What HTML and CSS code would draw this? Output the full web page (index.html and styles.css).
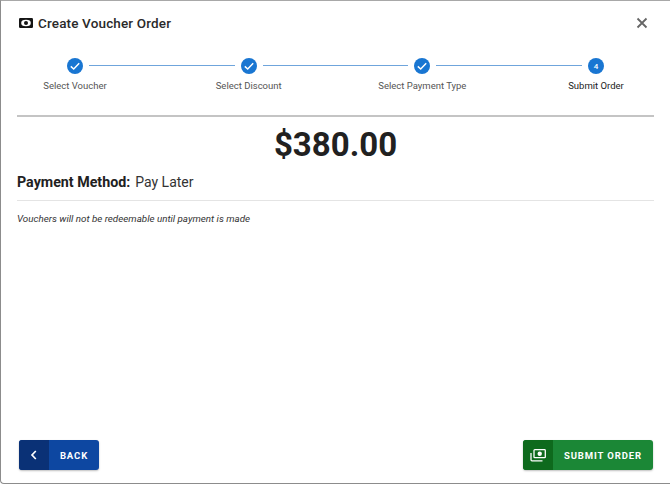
FILE: index.html

```html
<!DOCTYPE html>
<html lang="en">
<head>
  <meta charset="UTF-8">
  <title>Create Voucher Order</title>
  <link rel="stylesheet" href="styles.css">
</head>
<body>
  <div class="modal">
    <div class="modal-header">
      <svg class="title-icon" viewBox="0 0 14 10" width="14" height="10">
        <rect width="14" height="10" rx="1.200" fill="#151515"/>
        <ellipse cx="7" cy="5" rx="4.800" ry="3.200" fill="#fff"/>
        <circle cx="7" cy="5" r="2" fill="#151515"/>
      </svg>
      <h2 class="modal-title">Create Voucher Order</h2>
      <svg class="close-icon" viewBox="0 0 12 12" width="12" height="12">
        <path d="M1.500 1.500l9 9M10.500 1.500l-9 9" stroke="#666" stroke-width="1.800" fill="none"/>
      </svg>
    </div>

    <div class="stepper">
      <div class="step">
        <span class="step-dot"><svg viewBox="0 0 16 16" width="16" height="16"><path d="M3.800 8.400l2.900 2.600 5.500-5.700" stroke="#fff" stroke-width="1.500" fill="none"/></svg></span>
        <span class="step-label">Select Voucher</span>
      </div>
      <div class="connector"></div>
      <div class="step">
        <span class="step-dot"><svg viewBox="0 0 16 16" width="16" height="16"><path d="M3.800 8.400l2.900 2.600 5.500-5.700" stroke="#fff" stroke-width="1.500" fill="none"/></svg></span>
        <span class="step-label">Select Discount</span>
      </div>
      <div class="connector"></div>
      <div class="step">
        <span class="step-dot"><svg viewBox="0 0 16 16" width="16" height="16"><path d="M3.800 8.400l2.900 2.600 5.500-5.700" stroke="#fff" stroke-width="1.500" fill="none"/></svg></span>
        <span class="step-label">Select Payment Type</span>
      </div>
      <div class="connector"></div>
      <div class="step">
        <span class="step-dot">4</span>
        <span class="step-label step-label-active">Submit Order</span>
      </div>
    </div>

    <div class="modal-body">
      <div class="amount">$380.00</div>
      <div class="method">
        <span class="method-key">Payment Method:</span>
        <span class="method-value">Pay Later</span>
      </div>
      <p class="note">Vouchers will not be redeemable until payment is made</p>
    </div>

    <div class="modal-footer">
      <button class="btn btn-back">
        <span class="btn-icon">
          <svg viewBox="0 0 8 10" width="8" height="10"><path d="M5.800 1L2 5l3.800 4" stroke="#fff" stroke-width="1.700" fill="none"/></svg>
        </span>
        <span class="btn-text">BACK</span>
      </button>
      <button class="btn btn-submit">
        <span class="btn-icon">
          <svg viewBox="0 0 16 13" width="16" height="13">
            <rect x="4" y="0.700" width="11.300" height="8" rx="0.800" fill="none" stroke="#fff" stroke-width="1.300"/>
            <circle cx="9.700" cy="4.700" r="2.200" fill="#fff"/>
            <path d="M1 4v6.800a1 1 0 0 0 1 1h10.500" fill="none" stroke="#fff" stroke-width="1.300"/>
          </svg>
        </span>
        <span class="btn-text">SUBMIT ORDER</span>
      </button>
    </div>
  </div>
</body>
</html>
```

FILE: styles.css

```css
* {
  box-sizing: border-box;
}
html, body {
  margin: 0;
  height: 100%;
}
body {
  background: #fff;
  color: #212121;
  font-family: Roboto, "Liberation Sans", sans-serif;
}
.modal {
  display: flex;
  flex-direction: column;
  height: 484px;
  padding: 0 16px 0 16px;
  background: #fff;
  border-top: 1px solid #a8a8a8;
  border-left: 1px solid #8c8c8c;
  border-bottom: 1px solid #8c8c8c;
  border-bottom-left-radius: 4px;
}
.modal-header {
  display: flex;
  align-items: center;
  height: 44px;
  padding: 0 6px 0 2px;
}
.title-icon {
  margin-right: 5px;
}
.modal-title {
  flex: 1;
  margin: 0;
  font-size: 13.500px;
  font-weight: 500;
  letter-spacing: 0.15px;
  color: #2a2a2a;
}
.stepper {
  display: flex;
  margin-top: 13px;
  padding: 0 44px;
}
.step {
  display: flex;
  flex-direction: column;
  align-items: center;
  width: 28px;
  white-space: nowrap;
}
.step-dot {
  display: flex;
  align-items: center;
  justify-content: center;
  width: 16px;
  height: 16px;
  border-radius: 50%;
  background: #1976d2;
  color: #fff;
  font-size: 8px;
  font-weight: 500;
}
.step-label {
  margin-top: 5px;
  font-size: 9.500px;
  line-height: 14px;
  color: #555;
}
.step-label-active {
  color: #222;
}
.connector {
  flex: 1;
  height: 1px;
  margin-top: 7px;
  background: #6fa5dc;
}
.modal-body {
  flex: 1;
  margin-top: 22px;
  border-top: 2px solid #c4c4c4;
}
.amount {
  margin-top: 8px;
  text-align: center;
  font-size: 33px;
  line-height: 40px;
  font-weight: 700;
  color: #212121;
}
.method {
  display: flex;
  align-items: baseline;
  gap: 5px;
  padding: 8px 0 9px;
  border-bottom: 1px solid #e4e4e4;
}
.method-key {
  font-size: 14.250px;
  line-height: 18px;
  font-weight: 700;
}
.method-value {
  font-size: 14px;
  line-height: 18px;
  color: #333;
}
.note {
  margin: 11px 0 0;
  font-size: 9.800px;
  line-height: 14px;
  font-style: italic;
  color: #333;
}
.modal-footer {
  display: flex;
  justify-content: space-between;
  padding: 0 1px 13px 2px;
}
.btn {
  display: flex;
  align-items: stretch;
  height: 30px;
  padding: 0;
  border: 0;
  border-radius: 3px;
  overflow: hidden;
  color: #fff;
  font-family: inherit;
  box-shadow: 0 1px 2px rgba(0, 0, 0, 0.25);
}
.btn-icon {
  display: flex;
  align-items: center;
  justify-content: center;
  width: 30px;
}
.btn-text {
  flex: 1;
  align-self: center;
  font-size: 9.500px;
  font-weight: 700;
  letter-spacing: 0.9px;
  text-align: center;
}
.btn-back {
  width: 80px;
  background: #0d47a1;
}
.btn-back .btn-icon {
  background: #0a3176;
}
.btn-submit {
  width: 130px;
  background: #1b8736;
}
.btn-submit .btn-icon {
  background: #0e6a1d;
}
```
